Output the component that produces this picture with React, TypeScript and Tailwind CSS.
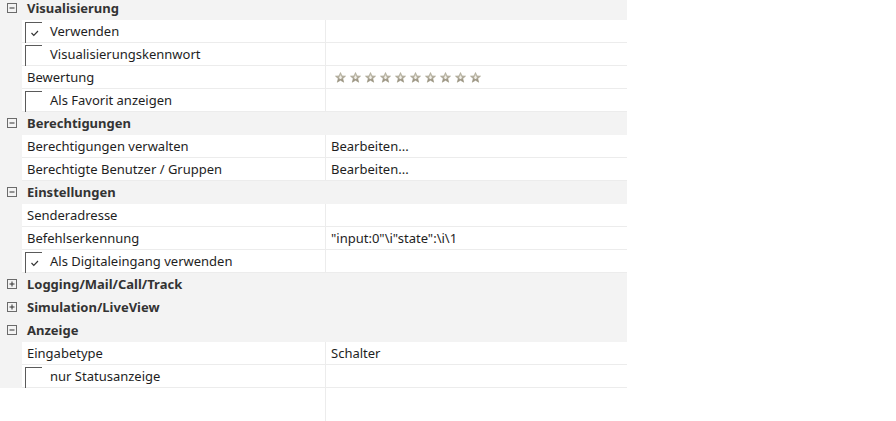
import React from "react";

type Row =
  | { kind: "group"; label: string; open: boolean }
  | { kind: "prop"; label: string; value?: string; stars?: boolean }
  | { kind: "check"; label: string; checked: boolean };

const rows: Row[] = [
  { kind: "group", label: "Visualisierung", open: true },
  { kind: "check", label: "Verwenden", checked: true },
  { kind: "check", label: "Visualisierungskennwort", checked: false },
  { kind: "prop", label: "Bewertung", stars: true },
  { kind: "check", label: "Als Favorit anzeigen", checked: false },
  { kind: "group", label: "Berechtigungen", open: true },
  { kind: "prop", label: "Berechtigungen verwalten", value: "Bearbeiten..." },
  { kind: "prop", label: "Berechtigte Benutzer / Gruppen", value: "Bearbeiten..." },
  { kind: "group", label: "Einstellungen", open: true },
  { kind: "prop", label: "Senderadresse" },
  { kind: "prop", label: "Befehlserkennung", value: '"input:0"\\i"state":\\i\\1' },
  { kind: "check", label: "Als Digitaleingang verwenden", checked: true },
  { kind: "group", label: "Logging/Mail/Call/Track", open: false },
  { kind: "group", label: "Simulation/LiveView", open: false },
  { kind: "group", label: "Anzeige", open: true },
  { kind: "prop", label: "Eingabetype", value: "Schalter" },
  { kind: "check", label: "nur Statusanzeige", checked: false },
];

const Toggle = ({ open }: { open: boolean }) => (
  <svg width="11" height="11" viewBox="0 0 11 11" className="block">
    <rect x="0.5" y="0.5" width="9" height="9" fill="none" stroke="#6b6b6b" />
    <line x1="2.5" y1="5" x2="7.5" y2="5" stroke="#333" />
    {!open && <line x1="5" y1="2.5" x2="5" y2="7.5" stroke="#333" />}
  </svg>
);

const Star = ({ id }: { id: number }) => (
  <svg width="11" height="11" viewBox="0 0 12 12" className="block">
    <defs>
      <linearGradient id={`sg-${id}`} x1="0" y1="0" x2="0" y2="1">
        <stop offset="0" stopColor="#d8d4c6" />
        <stop offset="1" stopColor="#8f8877" />
      </linearGradient>
    </defs>
    <polygon
      points="6,0.6 7.6,4.3 11.5,4.5 8.5,7.1 9.5,11.2 6,9 2.5,11.2 3.5,7.1 0.5,4.5 4.4,4.3"
      fill={`url(#sg-${id})`}
      stroke="#9b947f"
      strokeWidth="0.6"
    />
    <polygon points="6,3.6 7.4,5.6 6.8,7.6 5.2,7.6 4.6,5.6" fill="#f1efe8" />
  </svg>
);

const CheckBox = ({ checked }: { checked: boolean }) => (
  <div className="relative mt-[2px] h-[21px] w-[17px] self-start border-l border-t border-[#5a5a5a]">
    {checked && (
      <svg width="10" height="8" viewBox="0 0 10 8" className="absolute left-[4px] top-[6px]">
        <polyline points="1.5,4 3.8,6.3 8,2" fill="none" stroke="#333" strokeWidth="1.2" />
      </svg>
    )}
  </div>
);

const PropertyRow = ({ row }: { row: Row }) => {
  if (row.kind === "group")
    return (
      <div className="flex h-[23px] items-center bg-[#f3f3f3]">
        <div className="flex w-[22px] justify-center pl-[2px]">
          <Toggle open={row.open} />
        </div>
        <span className="pl-[5px] font-bold text-[#333]">{row.label}</span>
      </div>
    );

  return (
    <div className="flex h-[23px]">
      <div className="w-[22px] bg-[#f3f3f3]" />
      <div className="flex w-[304px] items-center border-b border-r border-[#ececec] pl-[3px]">
        {row.kind === "check" ? (
          <>
            <CheckBox checked={row.checked} />
            <span className="pl-[8px] pt-[2px]">{row.label}</span>
          </>
        ) : (
          <span className="pl-[2px] pt-[2px]">{row.label}</span>
        )}
      </div>
      <div className="flex flex-1 items-center border-b border-[#ececec] pl-[5px]">
        {row.kind === "prop" && row.stars && (
          <div className="flex gap-[4px] pl-[4px]">
            {Array.from({ length: 10 }).map((_, i) => (
              <Star key={i} id={i} />
            ))}
          </div>
        )}
        {row.kind === "prop" && row.value && <span className="pt-[2px]">{row.value}</span>}
      </div>
    </div>
  );
};

export default function App() {
  return (
    <div
      className="h-[421px] w-[896px] overflow-hidden bg-white text-[13px] text-[#1e1e1e]"
      style={{ fontFamily: '"Noto Sans", "Open Sans", sans-serif' }}
    >
      <div className="-mt-[3px] flex h-[424px] w-[627px] flex-col">
        {rows.map((row, i) => (
          <PropertyRow key={i} row={row} />
        ))}
        <div className="flex flex-1">
          <div className="w-[326px] border-r border-[#ececec]" />
        </div>
      </div>
    </div>
  );
}
